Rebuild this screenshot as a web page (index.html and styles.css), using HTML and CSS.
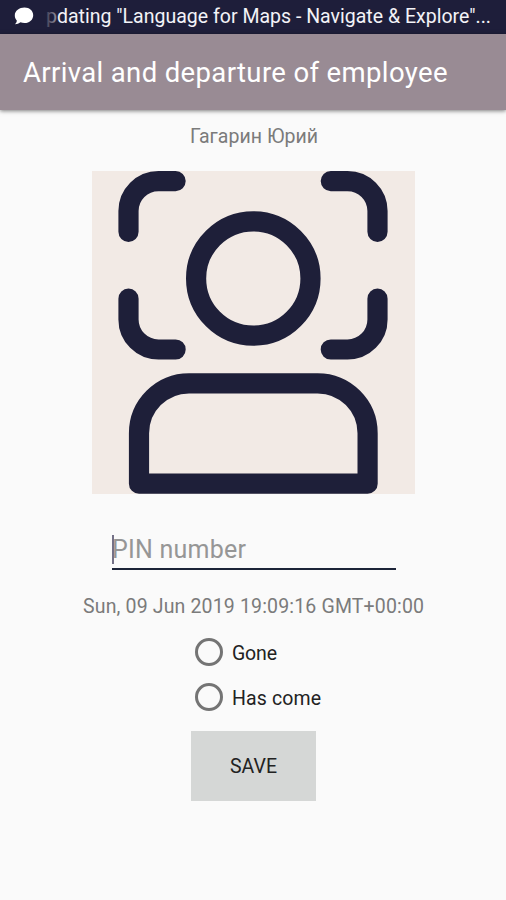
FILE: index.html
```html
<!DOCTYPE html>
<html lang="en">
<head>
<meta charset="utf-8">
<title>Arrival and departure of employee</title>
<link rel="stylesheet" href="styles.css">
</head>
<body>
<div class="status">
  <svg class="bubble" viewBox="0 0 20 18"><path d="M10.500.5C15.600.5 19.200 3.800 19.200 8.200S15.600 16 10.500 16C9 16 7.700 15.800 6.500 15.300C5 16.600 3 17.200 1 17.200C2.200 16 2.800 14.800 2.800 13.500C1.300 12 .8 10.200.8 8.200C.8 3.800 5.400.5 10.500.5Z"/></svg>
  <svg class="ticker" viewBox="0 0 450 34">
    <defs><linearGradient id="fade" gradientUnits="userSpaceOnUse" x1="0" y1="0" x2="18" y2="0"><stop offset="0" stop-color="#f4f4f8" stop-opacity=".15"/><stop offset=".55" stop-color="#f4f4f8" stop-opacity=".5"/><stop offset=".65" stop-color="#f4f4f8"/></linearGradient></defs>
    <text x="0" y="22.500" textLength="445" fill="url(#fade)">pdating "Language for Maps - Navigate &amp; Explore"...</text>
  </svg>
</div>
<header class="bar"><svg class="title" viewBox="0 0 430 76"><text x="0" y="48" textLength="424.500">Arrival and departure of employee</text></svg></header>
<main class="content">
  <svg class="name" viewBox="0 0 130 30"><text x="2" y="21" textLength="128">Гагарин Юрий</text></svg>
  <svg class="photo" viewBox="0 0 323 323">
    <path d="M83.600 10.100H66.500A30 30 0 0 0 36.500 40.100V60.800M238.800 10.100H255.500A30 30 0 0 1 285.500 40.100V60.800M36.500 127.700V148.500A30 30 0 0 0 66.500 178.500H83.600M285.500 127.700V148.500A30 30 0 0 1 255.500 178.500H238.800"/>
    <circle cx="161.300" cy="107.500" r="57.200"/>
    <path d="M47 312.700V262.300A50 50 0 0 1 97 212.300H225.600A50 50 0 0 1 275.600 262.300V312.700Z"/>
  </svg>
  <div class="pin"><i class="caret"></i><svg viewBox="0 0 284 40"><text x="0" y="27" textLength="134">PIN number</text></svg></div>
  <svg class="date" viewBox="0 0 344 30"><text x="2" y="21" textLength="341">Sun, 09 Jun 2019 19:09:16 GMT+00:00</text></svg>
  <div class="options">
    <div class="option"><span class="radio"></span><svg viewBox="0 0 92 30"><text x="0" y="23" textLength="45">Gone</text></svg></div>
    <div class="option"><span class="radio"></span><svg viewBox="0 0 92 30"><text x="0" y="23" textLength="89">Has come</text></svg></div>
  </div>
  <div class="save"><svg viewBox="0 0 50 30"><text x="1" y="22" textLength="47">SAVE</text></svg></div>
</main>
</body>
</html>
```
FILE: styles.css
```css
body {
  margin: 0;
  height: 900px;
  overflow: hidden;
  background: #fafafa;
  font-family: Roboto, sans-serif;
}
svg { display: block; flex: none; }
.status {
  display: flex;
  align-items: flex-start;
  height: 34px;
  background: #1e1e3a;
}
.bubble { width: 20px; height: 18px; margin: 7px 12px 0 14px; fill: #fff; }
.ticker { width: 450px; height: 34px; font-size: 19.500px; }
.bar {
  height: 76px;
  background: #998b94;
  box-shadow: 0 1px 4px rgba(0, 0, 0, .5);
}
.title { width: 430px; height: 76px; margin-left: 23px; fill: #fff; font-size: 27.500px; }
.content { display: flex; flex-direction: column; align-items: center; }
.name { width: 130px; height: 30px; margin-top: 12px; fill: #7b7b7b; font-size: 19.500px; }
.photo {
  width: 323px;
  height: 323px;
  margin: 19px 0 0 1px;
  background: #f2eae5;
  fill: none;
  stroke: #1e1f39;
  stroke-width: 20.200px;
  stroke-linecap: round;
  stroke-linejoin: round;
}
.pin {
  display: flex;
  align-items: flex-start;
  width: 284px;
  height: 37px;
  margin: 37px 0 0 2px;
  border-bottom: 2px solid #1c2438;
  position: relative;
}
.pin svg { width: 284px; height: 40px; fill: #969696; font-size: 25px; }
.caret { position: absolute; left: 0; top: 4px; width: 2px; height: 29px; background: #747187; }
.date { width: 344px; height: 30px; margin-top: 22px; fill: #7b7b7b; font-size: 19.500px; }
.options { width: 126px; margin: 15px 0 0 10px; }
.option { display: flex; align-items: center; height: 30px; }
.option + .option { margin-top: 15px; }
.option svg { width: 92px; height: 30px; margin-left: 9px; fill: #222; font-size: 19.500px; }
.radio {
  box-sizing: border-box;
  flex: none;
  width: 28px;
  height: 28px;
  border: 3px solid #747474;
  border-radius: 50%;
}
.save {
  display: flex;
  align-items: center;
  justify-content: center;
  width: 125px;
  height: 70px;
  margin: 19px 0 0 1px;
  background: #d5d7d6;
}
.save svg { width: 50px; height: 30px; fill: #222; font-size: 19.500px; }
```
